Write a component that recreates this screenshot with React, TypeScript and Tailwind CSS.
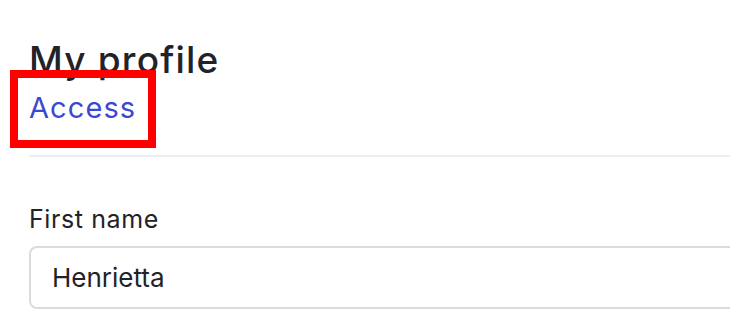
export default function App() {
  return (
    <div className="min-h-screen bg-white pl-[29px] font-['Inter',sans-serif] text-[#222328]">
      <div className="relative pt-[35px]">
        <h1 className="text-[37px] font-medium leading-[50px] tracking-[1.2px]">My profile</h1>
        <div className="mt-[3px] text-[29px] leading-[40px] tracking-[1.1px] text-[#3b48d6]">Access</div>
        <div className="pointer-events-none absolute left-[-19px] top-[70px] h-[78px] w-[146px] border-[8px] border-[#ff0000]" />
      </div>
      <div className="mt-[27px] h-[2px] w-[760px] bg-[#eceef1]" />
      <div className="pt-[45px]">
        <label className="block text-[25px] leading-[34px] tracking-[0.6px]">First name</label>
        <div className="mt-[10px] flex h-[63px] w-[760px] items-center rounded-[8px] border-2 border-[#d8dbe0] px-[21px] text-[26px] leading-[39px]">
          Henrietta
        </div>
      </div>
    </div>
  );
}
